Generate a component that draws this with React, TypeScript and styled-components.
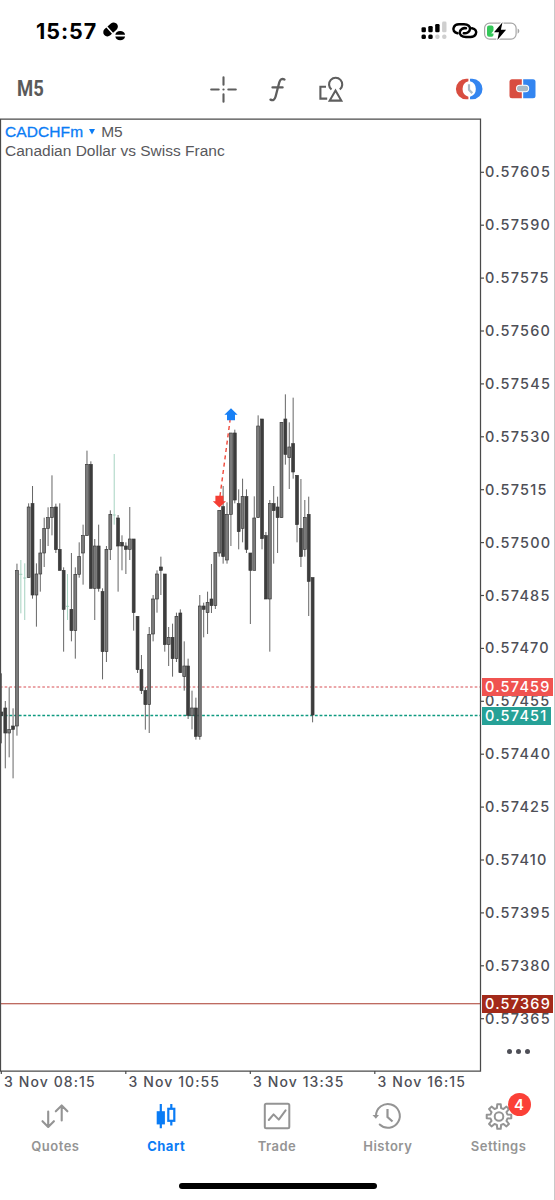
import React from "react";
import styled, { createGlobalStyle } from "styled-components";

const Global = createGlobalStyle`
  * { box-sizing: border-box; }
  body { margin: 0; background: #fff; }
  svg { display: block; overflow: visible; }
`;

const Screen = styled.main`
  width: 555px;
  height: 1200px;
  display: flex;
  flex-direction: column;
  background: #fff;
  border-right: 1px solid #c9c9c9;
  font-family: Inter, "Liberation Sans", sans-serif;
  overflow: hidden;
`;

const StatusBar = styled.header`
  height: 62px;
  padding: 0 35px 0 36px;
  display: flex;
  align-items: center;
  gap: 6px;
`;

const Clock = styled.span`
  font-size: 21.5px;
  font-weight: 700;
  line-height: 26px;
  width: 61px;
  white-space: nowrap;
  letter-spacing: 0.95px;
`;

const StatusIcons = styled.div`
  margin-left: auto;
  display: flex;
  align-items: center;
  gap: 6px;
`;

const Toolbar = styled.nav`
  height: 56px;
  padding: 0 18px 2px 17px;
  display: flex;
  align-items: center;
`;

const Timeframe = styled.span`
  font-family: Roboto, sans-serif;
  font-size: 22px;
  font-weight: 700;
  color: #5a5a5a;
  width: 193px;
  line-height: 26px;
  transform: scaleX(0.84);
  transform-origin: 0 50%;
`;

const Tools = styled.div`
  display: flex;
  align-items: center;
  gap: 27px;
`;

const TradeTools = styled(Tools)`
  margin-left: auto;
  gap: 27px;
`;

const ChartArea = styled.section`
  height: 954px;
  display: flex;
  position: relative;
`;

const Plot = styled.div`
  width: 482px;
  height: 954px;
`;

const Legend = styled.div`
  position: absolute;
  left: 5px;
  top: 4px;
  font-family: "Liberation Sans", sans-serif;
  font-size: 15.5px;
  line-height: 19px;
  color: #58585c;
  white-space: nowrap;
`;

const SymbolLine = styled.div`
  display: flex;
  align-items: center;
  gap: 5px;
`;

const SymbolName = styled.span`
  color: #0a7cf5;
  letter-spacing: 0.1px;
  -webkit-text-stroke: 0.3px #0a7cf5;
`;

const PriceAxis = styled.div`
  width: 72px;
  padding-top: 27.5px;
  display: flex;
  flex-direction: column;
`;

const PriceLabel = styled.span`
  flex: none;
  height: 52.9px;
  display: flex;
  align-items: center;
  font-size: 14.5px;
  font-weight: 500;
  letter-spacing: 1.2px;
  color: #4e4f57;
  padding-left: 3px;
`;

const PriceTag = styled.span<{ $y: number; $bg: string; $w: number }>`
  position: absolute;
  left: 482px;
  top: ${(p) => p.$y}px;
  width: ${(p) => p.$w}px;
  height: 18px;
  padding-left: 3px;
  background: ${(p) => p.$bg};
  color: #fff;
  font-size: 14.5px;
  font-weight: 500;
  line-height: 18px;
  letter-spacing: 1.2px;
`;

const More = styled.div`
  position: absolute;
  left: 507px;
  top: 931px;
  display: flex;
  gap: 4px;
`;

const Dot = styled.i`
  width: 5px;
  height: 5px;
  border-radius: 50%;
  background: #4e4f57;
`;

const TimeAxis = styled.div`
  height: 20px;
  padding-left: 4px;
  display: flex;
`;

const TimeLabel = styled.span`
  width: 124.5px;
  font-size: 14px;
  font-weight: 500;
  letter-spacing: 1.1px;
  line-height: 20px;
  color: #4e4f57;
  white-space: nowrap;
`;

const TabBar = styled.nav`
  display: grid;
  width: 554px;
  grid-template-columns: repeat(5, 110.8px);
  padding-top: 9px;
  height: 90px;
`;

const Tab = styled.div<{ $active?: boolean }>`
  display: flex;
  flex-direction: column;
  align-items: center;
  gap: 6px;
  color: ${(p) => (p.$active ? "#0a7cf5" : "#949494")};
  font-size: 13px;
  font-weight: ${(p) => (p.$active ? 700 : 600)};
  letter-spacing: 0.5px;
  line-height: 18px;
`;

const TabIcon = styled.div`
  position: relative;
  width: 30px;
  height: 30px;
`;

const Badge = styled.span`
  position: absolute;
  left: 24px;
  top: -8px;
  width: 23px;
  height: 23px;
  border-radius: 50%;
  background: #fb4037;
  color: #fff;
  font-size: 15px;
  line-height: 23px;
  letter-spacing: 0;
  text-align: center;
`;

const HomeIndicator = styled.div`
  width: 198px;
  height: 6px;
  margin: 1px 0 0 179px;
  border-radius: 3px;
  background: #000;
`;

type Candle = [kind: "u" | "d" | "g", high: number, top: number, bottom: number, low: number];

/* Candle extents in thirds of a pixel, measured from each session's own top line. */
const morning: Candle[] = [
  ["d", 700, 816, 827, 910], ["d", 783, 804, 879, 985], ["u", 742, 869, 879, 952],
  ["d", 805, 858, 868, 1015], ["u", 371, 392, 858, 887], ["g", 360, 403, 403, 520],
  ["g", 370, 414, 414, 540], ["u", 190, 201, 413, 413], ["d", 138, 191, 465, 476],
  ["u", 370, 402, 465, 560], ["u", 297, 339, 402, 455], ["u", 233, 265, 339, 381],
  ["u", 202, 233, 265, 318], ["u", 106, 202, 233, 286], ["d", 191, 201, 329, 339],
  ["d", 190, 328, 391, 391], ["d", 382, 391, 508, 635], ["g", 402, 499, 499, 540],
  ["d", 339, 508, 572, 604], ["u", 382, 403, 572, 656], ["u", 307, 350, 403, 413],
  ["u", 254, 287, 339, 434], ["u", 32, 73, 287, 287], ["d", 64, 73, 445, 445],
  ["u", 297, 318, 445, 540], ["d", 254, 318, 445, 455], ["d", 445, 455, 635, 718],
  ["u", 318, 328, 635, 666], ["u", 211, 223, 328, 360], ["g", 42, 225, 225, 254],
  ["d", 225, 234, 318, 455], ["d", 286, 307, 318, 391], ["d", 307, 318, 328, 402],
  ["u", 201, 297, 328, 360], ["d", 297, 297, 518, 572], ["d", 529, 529, 689, 699],
  ["d", 645, 689, 752, 762], ["d", 741, 752, 794, 869], ["u", 561, 583, 794, 879],
  ["u", 465, 477, 582, 604], ["u", 391, 402, 477, 518], ["d", 350, 381, 391, 465],
  ["d", 402, 402, 614, 635], ["u", 561, 592, 614, 678], ["d", 551, 592, 656, 710],
  ["u", 518, 529, 656, 666], ["d", 508, 519, 698, 699], ["u", 604, 678, 710, 752],
  ["d", 656, 678, 826, 837], ["u", 752, 804, 826, 868], ["d", 773, 804, 889, 899],
  ["u", 465, 498, 889, 899], ["d", 488, 498, 508, 592], ["u", 455, 487, 518, 582],
];
const midday: Candle[] = [
  ["d", 537, 642, 662, 684], ["u", 503, 503, 662, 672], ["u", 376, 376, 504, 515],
  ["d", 303, 365, 515, 536], ["u", 352, 388, 525, 536], ["u", 144, 144, 388, 483],
  ["d", 134, 144, 345, 355], ["d", 313, 356, 440, 493], ["u", 281, 335, 430, 472],
  ["d", 313, 335, 493, 504], ["d", 504, 504, 556, 717], ["u", 334, 399, 556, 556],
  ["u", 91, 123, 398, 398], ["d", 102, 102, 461, 493], ["d", 441, 452, 642, 642],
  ["u", 345, 356, 642, 800], ["d", 303, 356, 377, 536], ["d", 335, 366, 398, 504],
  ["u", 112, 112, 398, 398], ["d", 28, 102, 208, 239], ["u", 112, 186, 218, 312],
  ["d", 38, 176, 261, 281], ["d", 271, 271, 419, 472], ["d", 282, 430, 515, 546],
  ["u", 345, 398, 493, 515], ["d", 335, 388, 589, 693], ["d", 578, 578, 990, 1012],
];
const sessions = [
  { top: 440, first: 0, candles: morning },
  { top: 385, first: morning.length, candles: midday },
];

function CandleShape({ index, top, candle }: { index: number; top: number; candle: Candle }) {
  const [kind, high, open, close, low] = candle;
  const x = 1.4 + index * 3.89;
  const y = (v: number) => top + v / 3;
  if (kind === "g") {
    return (
      <g stroke="#9bcdb9" strokeWidth="0.9">
        <path d={`M${x} ${y(high)}V${y(low)}M${x - 1.5} ${y(open)}h3`} />
      </g>
    );
  }
  return (
    <g>
      <path d={`M${x} ${y(high)}V${y(low)}`} stroke="#555" strokeWidth="0.9" />
      <rect
        x={x - 1.45}
        y={y(open)}
        width="2.9"
        height={y(close) - y(open)}
        fill={kind === "u" ? "#7b7b7b" : "#3d3d3d"}
        stroke="#363636"
        strokeWidth="0.65"
      />
    </g>
  );
}

function PlotDrawing() {
  return (
    <svg width="482" height="954" viewBox="0 118 482 954" fill="none">
      <path d="M0 1003.8H480" stroke="#a93a2c" strokeWidth="1.1" />
      <path d="M0 687H480" stroke="#d84f55" strokeWidth="1.2" strokeDasharray="2.6 2.1" />
      <path d="M0 715.5H480" stroke="#0f9a80" strokeWidth="1.3" strokeDasharray="2.8 1.9" />
      {sessions.map((s) =>
        s.candles.map((c, i) => (
          <CandleShape key={s.first + i} index={s.first + i} top={s.top} candle={c} />
        ))
      )}
      <path d="M220 496L231 413" stroke="#f0483a" strokeWidth="1.4" strokeDasharray="4 3.4" />
      <path d="M231 408.200l6.600 6.500h-2.600v5.500h-8v-5.500h-2.600z" fill="#1880f5" />
      <path d="M219.400 507.500l-6.600-6.200h2.600v-5.500h8v5.500h2.600z" fill="#f43d33" />
      <path d="M0.5 1071V119H480.500V1071z" stroke="#4a4a4a" strokeWidth="1.25" />
      {prices.map((p, i) => (
        <path key={p} d={`M480 ${172.3 + i * 52.9}h4`} stroke="#4a4a4a" strokeWidth="1.2" />
      ))}
      {times.map((t, i) => (
        <path key={t} d={`M${1.3 + i * 124.5} 1071v3`} stroke="#4a4a4a" strokeWidth="1.2" />
      ))}
    </svg>
  );
}

const prices = [
  "0.57605", "0.57590", "0.57575", "0.57560", "0.57545", "0.57530", "0.57515", "0.57500", "0.57485",
  "0.57470", "0.57455", "0.57440", "0.57425", "0.57410", "0.57395", "0.57380", "0.57365",
];
const times = ["3 Nov 08:15", "3 Nov 10:55", "3 Nov 13:35", "3 Nov 16:15"];

const Pills = () => (
  <svg width="23" height="20" viewBox="103 21.5 23 20">
    <g transform="rotate(-42 110.5 30)">
      <path d="M108.700 25.800v8.400h-2.300a4.200 4.200 0 0 1 0-8.400zM110.200 25.800h4.600a4.200 4.200 0 0 1 0 8.400h-4.600z" />
    </g>
    <path d="M115.300 35.300a5 4.700 0 0 1 9.800 0zM115.300 36.900h9.800a5 4.700 0 0 1-9.800 0z" />
  </svg>
);

const Signal = () => (
  <svg width="25" height="18" viewBox="420 23 25 18">
    <g fill="#000">
      <rect x="420.5" y="28.2" width="4.4" height="5" rx="1.3" />
      <rect x="427.3" y="27" width="4.4" height="6.2" rx="1.3" />
      <rect x="434.2" y="25" width="4.4" height="8.2" rx="1.3" />
      <rect x="420.5" y="35.6" width="4.4" height="4.4" rx="1.5" />
      <rect x="427.3" y="35.6" width="4.4" height="4.4" rx="1.5" />
    </g>
    <g fill="#cfcfcf">
      <rect x="441.1" y="22.6" width="4.4" height="10.6" rx="1.3" />
      <rect x="434.2" y="35.6" width="4.4" height="4.4" rx="2" />
      <rect x="441.1" y="35.6" width="4.4" height="4.4" rx="2" />
    </g>
  </svg>
);

const Link = () => (
  <svg width="26" height="18" viewBox="452 23 26 18" fill="none" stroke="#000" strokeWidth="2.5" strokeLinecap="round">
    <path d="M457.5 34.3C454.2 33.5 452.5 31 453.8 28.2C454.6 26 456.5 25.2 459 25.2H464C468 25.2 470.5 27.5 470 30.2C469.5 33 466.5 34.8 463.8 34.2" />
    <path d="M472 29.2C475.5 29.8 477 32.500 475.8 35C474.9 37 473 38 470.5 38H466C461.8 38 459.2 35.8 459.8 33C460.3 30.2 463.2 28.6 466 29.3" />
  </svg>
);

const Battery = () => (
  <svg width="35" height="18" viewBox="484 22.5 35 18">
    <rect x="484.6" y="23.6" width="31.5" height="16" rx="5" fill="#fff" stroke="#a5a5a5" strokeWidth="1.2" />
    <rect x="487" y="26" width="6.5" height="11.2" rx="2" fill="#34c759" />
    <path d="M517.6 29v5.2a2.8 2.8 0 0 0 0-5.2z" fill="#a5a5a5" />
    <path d="M502.5 22.8l-8.500 10h5l-1.600 7.600 8.700-10.200h-5.200z" fill="#000" stroke="#fff" strokeWidth="2.600" paintOrder="stroke" />
  </svg>
);

const Crosshair = () => (
  <svg width="27" height="27" viewBox="0 0 27 27" fill="none" stroke="#5e5e5e" strokeWidth="2.1" strokeLinecap="round">
    <path d="M13.5 1.2v7.5M13.5 18.3v7.5M1.2 13.5h7.5M18.3 13.5h7.5M13.4 13.5h.2" />
  </svg>
);

const FunctionIcon = () => (
  <svg width="28" height="27" viewBox="264 76 28 27" fill="none" stroke="#5e5e5e" strokeWidth="2.3" strokeLinecap="round">
    <path d="M284.5 79.5C282 78.3 280.2 79.3 279.3 82.3L275.6 96.5C274.7 99.8 273.1 100.9 270.5 99.6M272.5 87.4H282.6" />
  </svg>
);

const Shapes = () => (
  <svg width="26" height="27" viewBox="319 75 26 27" fill="none" stroke="#5e5e5e" strokeWidth="2.1">
    <path d="M326 85.8h-5.6v11.8h6.8" />
    <path d="M331.5 88.5a6.6 6.6 0 1 1 8.3 0" />
    <path d="M335.5 89.5l5.8 10.1h-11.6z" />
  </svg>
);

const ClockTrade = () => (
  <svg width="26" height="22" viewBox="456 78.5 26 22">
    <path d="M468.400 79.200h-2.200a10.300 10.300 0 0 0 0 20.600h2.200v-2.600a8 8 0 0 1 0-15.400z" fill="#d84d40" />
    <path d="M470 79.200h2.200a10.300 10.300 0 0 1 0 20.600H470v-2.600a8 8 0 0 0 0-15.400z" fill="#3385f0" />
    <path d="M469 84.800v5.500l3.300 3.300" fill="none" stroke="#a9bac6" strokeWidth="2.200" />
  </svg>
);

const OneClick = () => (
  <svg width="27" height="20" viewBox="509 80 27 20">
    <path d="M521.800 80.200h-9.800a2.500 2.500 0 0 0-2.500 2.500v14a2.500 2.500 0 0 0 2.500 2.500h9.800z" fill="#d84d40" />
    <path d="M523.200 80.200h9.800a2.500 2.500 0 0 1 2.500 2.500v14a2.500 2.500 0 0 1-2.500 2.500h-9.800z" fill="#3385f0" />
    <rect x="517" y="86.800" width="11.200" height="5.400" rx="2.600" fill="#a9bac6" stroke="#fff" strokeWidth="2" paintOrder="stroke" />
  </svg>
);

const QuotesIcon = () => (
  <svg width="30" height="30" viewBox="40.5 1101.500 30 30" fill="none" stroke="currentColor" strokeWidth="2.100" strokeLinecap="round" strokeLinejoin="round">
    <path d="M48.700 1112v15.300M43 1121.700l5.700 5.800 5.700-5.800M62.200 1121V1106M56.300 1111.800l5.900-5.900 5.700 5.900" />
  </svg>
);

const ChartIcon = () => (
  <svg width="30" height="30" viewBox="151.5 1101.500 30 30" fill="none" stroke="currentColor" strokeWidth="2.200">
    <path d="M161.300 1104.500v24.300M171.800 1104.500v5M171.800 1121v5" />
    <rect x="158.300" y="1112.800" width="6" height="11" fill="currentColor" />
    <rect x="168.800" y="1109.300" width="6" height="12" />
  </svg>
);

const TradeIcon = () => (
  <svg width="30" height="30" viewBox="262.5 1101.500 30 30" fill="none" stroke="currentColor" strokeWidth="2">
    <rect x="265.300" y="1104.200" width="24.500" height="24.500" rx="1.500" />
    <path d="M269.300 1120.500l4.800-5.600 5.200 5.200 6.800-9.200" strokeLinejoin="round" strokeLinecap="round" />
  </svg>
);

const HistoryIcon = () => (
  <svg width="30" height="30" viewBox="373.5 1101.500 30 30" fill="none" stroke="currentColor" strokeWidth="2">
    <path d="M376.500 1116a11.900 11.900 0 1 1 3.700 9" strokeLinecap="round" />
    <path d="M388 1109.500v8l5 4.500" strokeWidth="2.200" />
    <path d="M373 1115.500h6.500l-3.100 3.700z" fill="currentColor" stroke="none" />
  </svg>
);

const gearPath = (() => {
  const pts: string[] = [];
  for (let i = 0; i < 8; i++) {
    [[-14, 8.7], [-8, 12.4], [8, 12.4], [14, 8.7]].forEach(([d, r]) => {
      const a = ((i * 45 + d) * Math.PI) / 180;
      pts.push(`${(15 + r * Math.sin(a)).toFixed(2)} ${(15.5 - r * Math.cos(a)).toFixed(2)}`);
    });
  }
  return `M${pts.join("L")}Z`;
})();

const SettingsIcon = () => (
  <svg width="30" height="30" viewBox="0 0 30 30" fill="none" stroke="currentColor" strokeWidth="2" strokeLinejoin="round">
    <path d={gearPath} />
    <circle cx="15" cy="15.5" r="4.3" />
  </svg>
);

const tabs = [
  { label: "Quotes", Icon: QuotesIcon },
  { label: "Chart", Icon: ChartIcon, active: true },
  { label: "Trade", Icon: TradeIcon },
  { label: "History", Icon: HistoryIcon },
  { label: "Settings", Icon: SettingsIcon, badge: 4 },
];

export default function App() {
  return (
    <Screen>
      <Global />
      <StatusBar>
        <Clock>15:57</Clock>
        <Pills />
        <StatusIcons>
          <Signal />
          <Link />
          <Battery />
        </StatusIcons>
      </StatusBar>
      <Toolbar>
        <Timeframe>M5</Timeframe>
        <Tools>
          <Crosshair />
          <FunctionIcon />
          <Shapes />
        </Tools>
        <TradeTools>
          <ClockTrade />
          <OneClick />
        </TradeTools>
      </Toolbar>
      <ChartArea>
        <Plot>
          <PlotDrawing />
        </Plot>
        <PriceAxis>
          {prices.map((p) => (
            <PriceLabel key={p}>{p}</PriceLabel>
          ))}
        </PriceAxis>
        <Legend>
          <SymbolLine>
            <SymbolName>CADCHFm</SymbolName>
            <svg width="8" height="7" viewBox="0 0 8 7">
              <path d="M1 1h6L4 6.5z" fill="#0a7cf5" />
            </svg>
            <span>M5</span>
          </SymbolLine>
          <div>Canadian Dollar vs Swiss Franc</div>
        </Legend>
        <PriceTag $y={560} $w={71} $bg="#f05350">0.57459</PriceTag>
        <PriceTag $y={588.5} $w={69} $bg="#26a197">0.57451</PriceTag>
        <PriceTag $y={877} $w={71} $bg="#a32a1a">0.57369</PriceTag>
        <More>
          <Dot />
          <Dot />
          <Dot />
        </More>
      </ChartArea>
      <TimeAxis>
        {times.map((t) => (
          <TimeLabel key={t}>{t}</TimeLabel>
        ))}
      </TimeAxis>
      <TabBar>
        {tabs.map(({ label, Icon, active, badge }) => (
          <Tab key={label} $active={active}>
            <TabIcon>
              <Icon />
              {badge && <Badge>{badge}</Badge>}
            </TabIcon>
            {label}
          </Tab>
        ))}
      </TabBar>
      <HomeIndicator />
    </Screen>
  );
}
